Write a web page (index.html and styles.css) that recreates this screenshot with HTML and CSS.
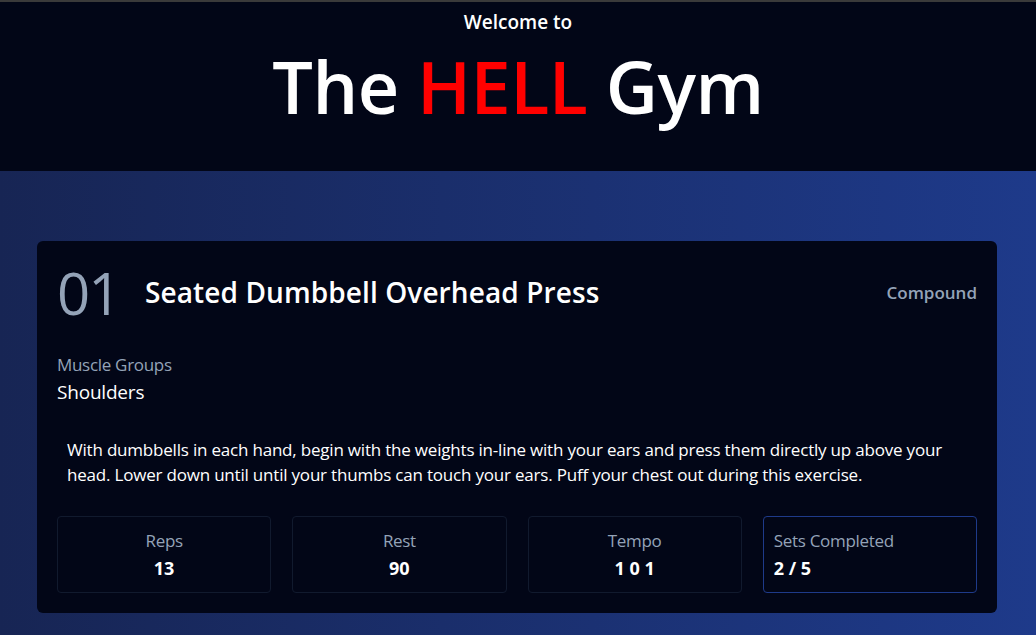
FILE: index.html
```html
<!DOCTYPE html>
<html lang="en">
<head>
<meta charset="utf-8">
<title>The HELL Gym</title>
<link rel="stylesheet" href="styles.css">
</head>
<body>
<div class="topbar"></div>
<header class="hero">
  <p class="welcome">Welcome to</p>
  <h1 class="brand">The <span class="hell">HELL</span> Gym</h1>
</header>
<main class="content">
  <section class="card">
    <div class="card-head">
      <span class="num">01</span>
      <h2 class="title">Seated Dumbbell Overhead Press</h2>
      <span class="type">Compound</span>
    </div>
    <div class="muscles">
      <div class="label">Muscle Groups</div>
      <div class="muscle-val">Shoulders</div>
    </div>
    <p class="desc">With dumbbells in each hand, begin with the weights in-line with your ears and press them directly up above your head. Lower down until until your thumbs can touch your ears. Puff your chest out during this exercise.</p>
    <div class="stats">
      <div class="stat"><div class="label">Reps</div><div class="val">13</div></div>
      <div class="stat"><div class="label">Rest</div><div class="val">90</div></div>
      <div class="stat"><div class="label">Tempo</div><div class="val">1 0 1</div></div>
      <div class="stat stat-active"><div class="label">Sets Completed</div><div class="val">2 / 5</div></div>
    </div>
  </section>
</main>
</body>
</html>
```

FILE: styles.css
```css
* { box-sizing: border-box; }
html, body { margin: 0; padding: 0; }
body {
  font-family: "Open Sans", "Noto Sans", sans-serif;
  background: linear-gradient(90deg, #172554 0%, #1e3a8a 100%);
  min-height: 635px;
  color: #fff;
}
.topbar { height: 2px; background: #3a3a3a; }
.hero {
  background: #020617;
  height: 169px;
  display: flex;
  flex-direction: column;
  align-items: center;
}
.welcome {
  margin: 8px 0 0;
  font-size: 19px;
  font-weight: 600;
  line-height: 24px;
}
.brand {
  margin: 4px 0 0;
  font-size: 72px;
  font-weight: 600;
  line-height: 96px;
  letter-spacing: -0.5px;
}
.hell { color: #ff0000; }
.content {
  padding: 70px 39px 0 37px;
}
.card {
  background: #020617;
  border-radius: 6px;
  padding: 20px 20px 20px 20px;
}
.card-head {
  display: flex;
  align-items: center;
  height: 64px;
}
.num {
  font-size: 58px;
  color: #94a3b8;
  font-weight: 500;
  line-height: 64px;
  width: 88px;
  letter-spacing: -2px;
}
.title {
  margin: 0;
  flex: 1;
  font-size: 28px;
  font-weight: 600;
  letter-spacing: 0.1px;
  position: relative;
  top: -1px;
}
.type {
  color: #94a3b8;
  font-size: 17px;
  font-weight: 600;
  position: relative;
  top: -1px;
}
.muscles { margin-top: 28px; }
.label {
  color: #94a3b8;
  font-size: 17px;
  line-height: 24px;
  letter-spacing: -0.3px;
}
.muscle-val {
  font-size: 19px;
  line-height: 30px;
  letter-spacing: -0.2px;
}
.desc {
  margin: 30px 0 0;
  padding: 0 10px;
  font-size: 17px;
  line-height: 25px;
  letter-spacing: -0.2px;
}
.stats {
  margin-top: 29px;
  display: grid;
  grid-template-columns: repeat(4, 1fr);
  gap: 21px;
}
.stat {
  height: 77px;
  border: 1px solid #111a2e;
  border-radius: 4px;
  text-align: center;
  padding-top: 12px;
}
.stat .val {
  font-size: 18px;
  font-weight: 700;
  line-height: 30px;
}
.stat-active {
  border-color: #1e3a8a;
  text-align: left;
  padding-left: 10px;
}
```
